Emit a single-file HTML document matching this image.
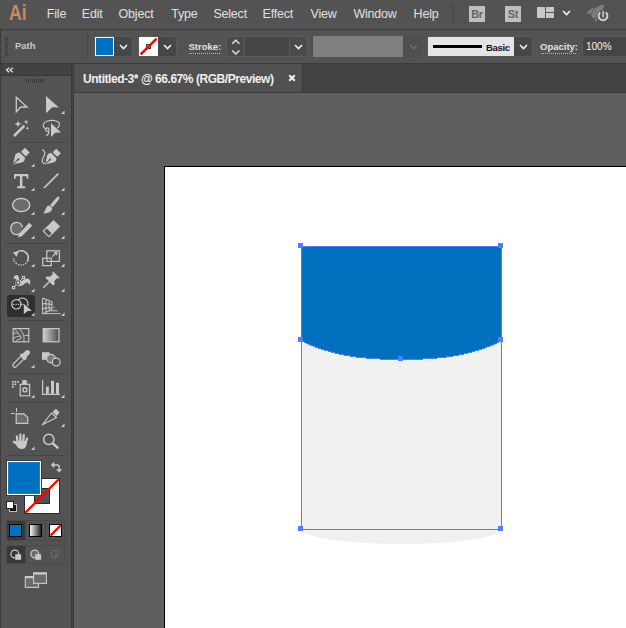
<!DOCTYPE html>
<html><head><meta charset="utf-8">
<style>
*{margin:0;padding:0;box-sizing:border-box}
html,body{width:626px;height:628px;overflow:hidden;background:#535353;font-family:"Liberation Sans",sans-serif}
.a{position:absolute}
#menu{left:0;top:0;width:626px;height:28px;background:#535353}
.mi{position:absolute;top:6.8px;font-size:12.5px;color:#e0e0e0;letter-spacing:-0.2px;line-height:15px}
#ctl{left:0;top:30px;width:626px;height:33px;background:#535353}
.lbl{position:absolute;font-size:10px;color:#d6d6d6;line-height:12px}
.dd{position:absolute;background:#474747;border-radius:3px}
#tabbar{left:74px;top:64px;width:552px;height:28px;background:#434343}
#tab{left:74px;top:64px;width:228px;height:28px;background:#505050;border-right:1px solid #3c3c3c;width:229px}
#canvas{left:74px;top:93px;width:552px;height:535px;background:#5f5f5f}
#panel{left:0;top:64px;width:71px;height:564px;background:#535353}
</style></head><body>
<!-- menu bar -->
<div id="menu" class="a">
  <div class="a" style="left:8.5px;top:1.6px;font-size:22px;font-weight:bold;color:#c88b60;letter-spacing:0px;line-height:22px;transform:scaleX(0.8);transform-origin:0 0">Ai</div>
  <div class="mi" style="left:46.8px">File</div>
  <div class="mi" style="left:81.8px">Edit</div>
  <div class="mi" style="left:118.6px">Object</div>
  <div class="mi" style="left:171.2px">Type</div>
  <div class="mi" style="left:213.4px">Select</div>
  <div class="mi" style="left:262.5px">Effect</div>
  <div class="mi" style="left:310.5px">View</div>
  <div class="mi" style="left:353.4px">Window</div>
  <div class="mi" style="left:413.6px">Help</div>
  <div class="a" style="left:452px;top:4px;width:2px;height:20px;background:#4a4a4a"></div>
  <div class="a" style="left:469px;top:6px;width:16px;height:16px;background:#bfbfbf;color:#666;font-size:11px;font-weight:bold;line-height:16px;text-align:center;letter-spacing:-0.3px">Br</div>
  <div class="a" style="left:505px;top:6px;width:16px;height:16px;background:#bfbfbf;color:#666;font-size:11px;font-weight:bold;line-height:16px;text-align:center;letter-spacing:-0.3px">St</div>
  <svg class="a" style="left:537px;top:7px" width="17" height="11"><g fill="#c8c8c8"><rect x="0" y="0" width="8" height="11"/><rect x="9" y="0" width="8" height="5"/><rect x="9" y="6" width="8" height="5"/></g></svg>
  <svg class="a" style="left:562px;top:10px" width="9" height="6"><path d="M1 1 L4.5 4.5 L8 1" fill="none" stroke="#f0f0f0" stroke-width="1.6"/></svg>
  <svg class="a" style="left:582px;top:0px" width="32" height="26">
  <path d="M9 15.5 C10 10.5 15 5.5 22.2 4.6 C21.8 11.5 17 16.8 11.8 18.4 Z" fill="#7e7e7e"/>
  <path d="M4.8 13.6 C6.2 10.2 9.2 8 12.8 8 C10.8 9.8 9.2 11.8 8.8 14 Z" fill="#7e7e7e"/>
  <path d="M12.8 22.2 C12.5 19.8 13.4 17.6 15.4 16.8 L16.4 19.2 Z" fill="#7e7e7e"/>
  <circle cx="21" cy="16.4" r="6.4" fill="#535353"/>
  <path d="M18.3 12.4 A4.4 4.4 0 1 0 23.7 12.4" fill="none" stroke="#d2d2d2" stroke-width="2"/>
  <rect x="20" y="10.8" width="2.1" height="7" fill="#d2d2d2" stroke="#535353" stroke-width="0.6"/>
</svg>
</div>
<div class="a" style="left:0;top:29px;width:626px;height:1px;background:#3c3c3c"></div>

<!-- control bar -->
<div id="ctl" class="a"></div>
<!-- grip -->
<svg class="a" style="left:5px;top:37px" width="4" height="19"><g fill="#3a3a3a"><rect x="0" y="0" width="3" height="1"/><rect x="0" y="2" width="3" height="1"/><rect x="0" y="4" width="3" height="1"/><rect x="0" y="6" width="3" height="1"/><rect x="0" y="8" width="3" height="1"/><rect x="0" y="10" width="3" height="1"/><rect x="0" y="12" width="3" height="1"/><rect x="0" y="14" width="3" height="1"/><rect x="0" y="16" width="3" height="1"/><rect x="0" y="18" width="3" height="1"/></g></svg>
<div class="lbl" style="left:15px;top:39.5px;font-size:9.5px;font-weight:bold;color:#c8c8c8">Path</div>
<div class="a" style="left:87px;top:34px;width:1px;height:25px;background:#474747"></div>
<div class="a" style="left:88px;top:34px;width:1px;height:25px;background:#4f4f4f"></div>
<!-- fill control -->
<div class="dd" style="left:94px;top:36px;width:39px;height:21px;border:1px solid #5a5a5a"></div>
<div class="a" style="left:95px;top:37px;width:19px;height:19px;background:#0070c0;border:1px solid #f4f4f4"></div>
<svg class="a" style="left:119px;top:44px" width="9" height="6"><path d="M1 1 L4.5 4.5 L8 1" fill="none" stroke="#f0f0f0" stroke-width="1.6"/></svg>
<!-- stroke control -->
<div class="dd" style="left:138px;top:36px;width:39px;height:21px;border:1px solid #5a5a5a"></div>
<svg class="a" style="left:139px;top:37px" width="19" height="19"><rect width="19" height="19" fill="#fff"/><rect x="7.6" y="7.6" width="3.8" height="3.8" fill="none" stroke="#16201f" stroke-width="1"/><line x1="1.6" y1="17.4" x2="17.6" y2="1.6" stroke="#ff0000" stroke-width="2.6"/></svg>
<svg class="a" style="left:163px;top:44px" width="9" height="6"><path d="M1 1 L4.5 4.5 L8 1" fill="none" stroke="#f0f0f0" stroke-width="1.6"/></svg>
<!-- stroke label -->
<div class="lbl" style="left:188.5px;top:41.2px;font-size:9.5px;font-weight:bold;color:#e2e2e2">Stroke:</div>
<div class="a" style="left:189px;top:53px;width:31px;height:1px;background:repeating-linear-gradient(90deg,#bdbdbd 0 1px,transparent 1px 2px)"></div>
<!-- spinner group -->
<div class="dd" style="left:226px;top:36px;width:82px;height:21px;background:#4b4b4b;border:1px solid #5c5c5c"></div>
<div class="a" style="left:245px;top:37px;width:44px;height:19px;background:#464646"></div>
<div class="a" style="left:244px;top:37px;width:1px;height:19px;background:#5a5a5a"></div>
<div class="a" style="left:289px;top:37px;width:1px;height:19px;background:#5a5a5a"></div>
<svg class="a" style="left:231px;top:38.6px" width="10" height="17"><path d="M1.2 4.8 L4.8 1.3 L8.4 4.8 M1.2 11.5 L4.8 15 L8.4 11.5" fill="none" stroke="#e6e6e6" stroke-width="1.4"/></svg>
<svg class="a" style="left:293.5px;top:44px" width="9" height="6"><path d="M1 1 L4.5 4.5 L8 1" fill="none" stroke="#f0f0f0" stroke-width="1.6"/></svg>
<!-- variable width (disabled) -->
<div class="a" style="left:311px;top:36px;width:111px;height:21px;background:#4f4f4f;border-radius:3px"></div>
<div class="a" style="left:313px;top:36px;width:90px;height:21px;background:#7f7f7f"></div>
<svg class="a" style="left:409px;top:44px" width="9" height="6"><path d="M1 1 L4.5 4.5 L8 1" fill="none" stroke="#6c6c6c" stroke-width="1.6"/></svg>
<!-- brush -->
<div class="dd" style="left:427px;top:36px;width:106px;height:21px;border:1px solid #5a5a5a"></div>
<div class="a" style="left:428px;top:37px;width:86px;height:19px;background:#e4e4e4"></div>
<div class="a" style="left:433px;top:45px;width:49px;height:3px;background:#000"></div>
<div class="lbl" style="left:486px;top:41.5px;font-size:9.5px;font-weight:bold;color:#10102a;letter-spacing:-0.3px">Basic</div>
<svg class="a" style="left:519px;top:44px" width="9" height="6"><path d="M1 1 L4.5 4.5 L8 1" fill="none" stroke="#f0f0f0" stroke-width="1.6"/></svg>
<!-- opacity -->
<div class="lbl" style="left:540px;top:41.2px;font-size:9.5px;font-weight:bold;color:#e2e2e2">Opacity:</div>
<div class="a" style="left:541px;top:53px;width:36px;height:1px;background:repeating-linear-gradient(90deg,#bdbdbd 0 1px,transparent 1px 2px)"></div>
<div class="dd" style="left:582px;top:36px;width:50px;height:21px;border:1px solid #5a5a5a;background:#454545"></div>
<div class="lbl" style="left:586px;top:40.5px;font-size:10px;color:#f4f4f4">100%</div>
<div class="a" style="left:0;top:63px;width:626px;height:1px;background:#3a3a3a"></div>
<!-- panel -->
<div id="panel" class="a"></div>
<div class="a" style="left:0;top:64px;width:71px;height:11px;background:#424242"></div>
<div class="a" style="left:0;top:75px;width:71px;height:1px;background:#3a3a3a"></div>
<div class="a" style="left:71px;top:64px;width:3px;height:564px;background:#393939"></div>
<div class="a" style="left:72px;top:64px;width:1px;height:564px;background:#444"></div>
<div class="a" style="left:0;top:29px;width:1px;height:599px;background:#3c3c3c"></div>
<svg class="a" style="left:0;top:0" width="74" height="628">
<defs>
<linearGradient id="gr1" x1="0" x2="1" y1="0" y2="0"><stop offset="0" stop-color="#d4d4d4"/><stop offset="1" stop-color="#4a4a4a"/></linearGradient>
<linearGradient id="gr2" x1="0" x2="1" y1="0" y2="0"><stop offset="0" stop-color="#ffffff"/><stop offset="1" stop-color="#1a1a1a"/></linearGradient>
</defs>
<!-- header chevrons -->
<path d="M9.2 67.8 L6.5 70 L9.2 72.2 M12.8 67.8 L10.1 70 L12.8 72.2" fill="none" stroke="#e0e0e0" stroke-width="1.3"/>
<!-- grip -->
<g fill="#3a3a3a"><rect x="26" y="79" width="1" height="4"/><rect x="28" y="79" width="1" height="4"/><rect x="30" y="79" width="1" height="4"/><rect x="32" y="79" width="1" height="4"/><rect x="34" y="79" width="1" height="4"/><rect x="36" y="79" width="1" height="4"/><rect x="38" y="79" width="1" height="4"/><rect x="40" y="79" width="1" height="4"/><rect x="42" y="79" width="1" height="4"/><rect x="44" y="79" width="1" height="4"/></g>
<!-- separators -->
<g fill="#464646"><rect x="6" y="142" width="60" height="1"/><rect x="6" y="243" width="60" height="1"/><rect x="6" y="320" width="60" height="1"/><rect x="6" y="373" width="60" height="1"/><rect x="6" y="402" width="60" height="1"/><rect x="6" y="455" width="60" height="1"/></g>
<!-- shape builder selected bg -->
<rect x="7" y="295" width="28" height="22" rx="3" fill="#2f2f2f"/>
<g fill="#c9c9c9" stroke="none">
<!-- corner triangles -->
<path d="M61 114 H64.5 V110.5Z"/>
<path d="M31 167 H34.5 V163.5Z"/>
<path d="M31 191 H34.5 V187.5Z"/><path d="M61 191 H64.5 V187.5Z"/>
<path d="M31 215 H34.5 V211.5Z"/><path d="M61 215 H64.5 V211.5Z"/>
<path d="M31 239 H34.5 V235.5Z"/><path d="M61 239 H64.5 V235.5Z"/>
<path d="M31 267 H34.5 V263.5Z"/><path d="M61 267 H64.5 V263.5Z"/>
<path d="M31 292 H34.5 V288.5Z"/><path d="M61 292 H64.5 V288.5Z"/>
<path d="M31 316 H34.5 V312.5Z"/><path d="M61 316 H64.5 V312.5Z"/>
<path d="M31 368 H34.5 V364.5Z"/>
<path d="M31 398 H34.5 V394.5Z"/><path d="M61 398 H64.5 V394.5Z"/>
<path d="M61 427 H64.5 V423.5Z"/>
<path d="M31 450 H34.5 V446.5Z"/>
<!-- direct selection -->
<path d="M46 96 L58.8 107.4 L52.3 107.2 L46 113.2Z"/>
</g>
<!-- selection -->
<path d="M16.3 97.2 L27 107 L20.8 107 L16.3 111.8Z" fill="none" stroke="#c9c9c9" stroke-width="1.3" stroke-linejoin="miter"/>
<!-- magic wand -->
<line x1="14" y1="136" x2="24.4" y2="125.6" stroke="#c9c9c9" stroke-width="2.5"/>
<g fill="#c9c9c9">
<path d="M18 120.5 L18.9 123.1 L21.5 124 L18.9 124.9 L18 127.5 L17.1 124.9 L14.5 124 L17.1 123.1Z"/>
<path d="M26.2 119.3 L26.9 121.2 L28.8 121.9 L26.9 122.6 L26.2 124.5 L25.5 122.6 L23.6 121.9 L25.5 121.2Z"/>
<path d="M27.4 126.3 L27.9 127.7 L29.3 128.2 L27.9 128.7 L27.4 130.1 L26.9 128.7 L25.5 128.2 L26.9 127.7Z"/>
</g>
<!-- lasso -->
<path d="M46.2 129.2 C43 127.8 42.2 124.6 44.6 122.4 C47.6 119.8 55 119.6 58.2 121.9 C60.2 123.4 59.8 126.4 57.2 128.2" fill="none" stroke="#c9c9c9" stroke-width="1.2"/>
<circle cx="47.4" cy="129.6" r="1.7" fill="none" stroke="#c9c9c9" stroke-width="1.2"/>
<path d="M48.6 130.8 C49.2 132.8 48.2 134.6 46.2 135.6" fill="none" stroke="#c9c9c9" stroke-width="1.2"/>
<path d="M51 123.2 L61 132.6 L55.2 132.8 L51 136.9Z" fill="#c9c9c9" stroke="#535353" stroke-width="0.8" paint-order="stroke"/>
<!-- pen -->
<g transform="translate(13,164.5) rotate(45)">
<path d="M0 0 L-5.2 -8.5 C-5.6 -10.5 -5 -12 -3.8 -13.2 L3.8 -13.2 C5 -12 5.6 -10.5 5.2 -8.5Z" fill="#c9c9c9"/>
<rect x="-3.4" y="-20.2" width="6.8" height="5.4" fill="#c9c9c9"/>
<line x1="0" y1="-0.5" x2="0" y2="-7" stroke="#535353" stroke-width="1"/>
<circle cx="0" cy="-7.5" r="1.1" fill="#535353"/>
</g>
<!-- curvature pen -->
<g transform="translate(45,164.5) rotate(45) scale(0.95)">
<path d="M0 0 L-5.2 -8.5 C-5.6 -10.5 -5 -12 -3.8 -13.2 L3.8 -13.2 C5 -12 5.6 -10.5 5.2 -8.5Z" fill="#c9c9c9"/>
<rect x="-3.4" y="-20.2" width="6.8" height="5.4" fill="#c9c9c9"/>
<line x1="0" y1="-0.5" x2="0" y2="-7" stroke="#535353" stroke-width="1"/>
<circle cx="0" cy="-7.5" r="1.1" fill="#535353"/>
</g>
<path d="M42 149.5 C45.5 150.5 45.5 154 43.5 157 C41.5 160 41.5 164 45.5 163.5" fill="none" stroke="#c9c9c9" stroke-width="1.2"/>
<!-- type -->
<path d="M14 174 H28.3 V178.8 H26.6 V176.3 H22.4 V186.2 H25.2 V188.2 H17.2 V186.2 H19.9 V176.3 H15.7 V178.8 H14Z" fill="#c9c9c9"/>
<!-- line -->
<line x1="44" y1="188" x2="58.3" y2="173.6" stroke="#c9c9c9" stroke-width="1.7"/>
<!-- ellipse -->
<ellipse cx="21.2" cy="205" rx="8.6" ry="6.6" fill="#6c6c6c" stroke="#d0d0d0" stroke-width="1.3"/>
<!-- paintbrush -->
<path d="M58.6 196.5 C59.8 196.8 59.6 198.5 58 200.5 L52.6 207.2 L50.2 205 L56 198.3 C57.2 197 58 196.4 58.6 196.5Z" fill="#c9c9c9"/>
<path d="M49.6 205.5 L52.2 207.9 C52 211.5 48.5 213.6 43 213.2 C44.8 211.8 45.3 209.6 46.2 207.8 C47 206.2 48.3 205.4 49.6 205.5Z" fill="#c9c9c9"/>
<!-- shaper -->
<path d="M20.6 233.2 C19.5 234.2 18 234.7 16.6 234.7 C13 234.7 10.8 231.9 10.8 228.4 C10.8 224.9 13.3 222.3 16.6 222.3 C19.6 222.3 22 224.5 22.4 227.2" fill="#6c6c6c" stroke="#cfcfcf" stroke-width="1.3"/>
<path d="M29.2 222.8 L32.2 225.8 L21.8 236.2 L18.2 237.4 L19 233.8Z" fill="#c9c9c9"/>
<!-- eraser -->
<g transform="translate(51.3,228.7) rotate(45)">
<rect x="-4.6" y="-7.8" width="9.2" height="10.2" fill="#c9c9c9"/>
<rect x="-4" y="2.4" width="8" height="5" fill="none" stroke="#c9c9c9" stroke-width="1.2"/>
</g>
<!-- rotate -->
<path d="M16.5 252.3 C18 251.2 19.6 250.7 21.2 250.7 C25.3 250.7 28.3 254 28.3 257.8 C28.3 259.3 27.9 260.6 27.2 261.7" fill="none" stroke="#c9c9c9" stroke-width="1.6"/>
<path d="M12.8 252.3 L18.6 251.6 L16.6 256.8Z" fill="#c9c9c9"/>
<g fill="#c9c9c9"><circle cx="25.8" cy="263.4" r="0.8"/><circle cx="23.5" cy="264.7" r="0.8"/><circle cx="21" cy="265.1" r="0.8"/><circle cx="18.5" cy="264.7" r="0.8"/><circle cx="16.2" cy="263.4" r="0.8"/><circle cx="14.4" cy="261.4" r="0.8"/><circle cx="13.6" cy="259" r="0.8"/></g>
<!-- scale -->
<rect x="42.7" y="258.2" width="8.6" height="7.4" fill="none" stroke="#c9c9c9" stroke-width="1.2"/>
<rect x="46.8" y="250.8" width="12.6" height="10.6" fill="none" stroke="#c9c9c9" stroke-width="1.2"/>
<line x1="52.3" y1="256.6" x2="56.5" y2="252.6" stroke="#c9c9c9" stroke-width="1.2"/>
<path d="M57.5 251.5 L57.2 255.8 L53.4 252Z" fill="#c9c9c9"/>
<!-- puppet warp -->
<path d="M14 279.2 C13.3 277.3 14.3 275.2 16.2 275.1 C17.8 275.1 18.9 276.6 19 278.6 C19.1 280.3 19.8 281.3 21.3 280.9 C23.2 280.3 24.6 278.6 26.6 278.4 C28.7 278.3 30.4 279.8 30.3 282 C30.3 283.2 29.9 284.4 29.3 285.2 C29 283.8 28.5 282.3 27.2 282.4 C25.3 282.6 23.6 285.1 20.6 285.9 C17.8 286.6 15.3 285.3 15.3 283 C15.3 281.6 16.4 280.7 16.3 279.6 C16.2 278.6 15.1 278.4 14 279.2Z" fill="#c9c9c9"/>
<line x1="13.5" y1="287.5" x2="23.5" y2="277.5" stroke="#c9c9c9" stroke-width="1"/>
<rect x="12.5" y="286.5" width="2.2" height="2.2" fill="#535353" stroke="#d0d0d0" stroke-width="1"/>
<circle cx="18.1" cy="282.7" r="1.9" fill="#c9c9c9" stroke="#535353" stroke-width="1.1"/>
<rect x="22.4" y="276.4" width="2.2" height="2.2" fill="#535353" stroke="#d0d0d0" stroke-width="1"/>
<!-- pin -->
<g transform="translate(50,281) rotate(45)">
<path d="M-4.5 -9 H4.5 V-7.5 H3 V-3 L5.5 -1 V1 H-5.5 V-1 L-3 -3 V-7.5 H-4.5Z" fill="#c9c9c9"/>
<line x1="0" y1="1" x2="0" y2="9.5" stroke="#c9c9c9" stroke-width="1.5"/>
</g>
<!-- shape builder -->
<path d="M18.2 299.9 C19.2 298.7 20.6 298 22.2 298 C25.4 298 28 300.6 28 303.8 C28 304.6 27.8 305.3 27.6 306" fill="none" stroke="#cfcfcf" stroke-width="1.2"/>
<circle cx="16.4" cy="304.3" r="4.7" fill="none" stroke="#cfcfcf" stroke-width="1.2"/>
<g fill="#ececec"><circle cx="13.8" cy="304.3" r="0.65"/><circle cx="16.1" cy="304.3" r="0.65"/><circle cx="18.4" cy="304.3" r="0.65"/><circle cx="20.7" cy="304.3" r="0.65"/><circle cx="23" cy="304.3" r="0.65"/></g>
<path d="M23.8 303.8 L32 311 L27.6 311 L23.8 314.2Z" fill="#c9c9c9"/>
<!-- perspective grid -->
<path d="M42.6 298 V314 M42.6 298 L52 301.8 V309.6 M46 299.4 V312.5 M49.2 300.7 V311.1 M42.6 303.4 L52 304.6 M42.6 308.8 L52 307.4 M42.6 314 L52 309.6" fill="none" stroke="#c9c9c9" stroke-width="1.05"/>
<path d="M52 305.5 L55.5 308.2 H52Z" fill="#8c8c8c"/>
<path d="M50 310.8 H57.8 M44 313.6 H60.8" fill="none" stroke="#bdbdbd" stroke-width="1"/>
<!-- mesh -->
<rect x="13.2" y="328.6" width="15.6" height="13.2" fill="none" stroke="#c9c9c9" stroke-width="1.2"/>
<path d="M18.8 328.6 C22.8 331.5 24.8 336 23.8 341.8 M13.2 333.6 C15.5 332.4 17.8 332.8 19.6 334.6 C20.8 335.8 21.2 337.5 21 338.8 M13.2 339 C15 337 17.5 336 20.5 336.2 M24.5 335.4 H28.8 M15.5 341.8 C16.5 340 18.5 338.8 21.2 338.9 M14.5 329.4 C16.3 330.6 17.6 331.8 18.4 333.3" fill="none" stroke="#c9c9c9" stroke-width="1"/>
<!-- gradient -->
<rect x="43.2" y="328.6" width="15.8" height="13.2" fill="url(#gr1)" stroke="#c9c9c9" stroke-width="1.2"/>
<!-- eyedropper -->
<g transform="translate(20.5,359.5) rotate(45)">
<rect x="-2" y="-3" width="4" height="13" rx="2" fill="none" stroke="#c9c9c9" stroke-width="1.2"/>
<rect x="-3.8" y="-5.5" width="7.6" height="3.2" rx="1" fill="#c9c9c9"/>
<path d="M-2.6 -5 V-9.5 C-2.6 -11.3 -1.4 -12.4 0 -12.4 C1.4 -12.4 2.6 -11.3 2.6 -9.5 V-5Z" fill="#c9c9c9"/>
</g>
<!-- blend -->
<rect x="42" y="352.2" width="7.6" height="7.6" fill="#c9c9c9"/>
<circle cx="51" cy="358.6" r="4.3" fill="#7c7c7c" stroke="#c9c9c9" stroke-width="1.2"/>
<circle cx="56.2" cy="362" r="3.9" fill="#535353" stroke="#c9c9c9" stroke-width="1.2"/>
<!-- symbol sprayer -->
<g fill="#c9c9c9"><rect x="12" y="381" width="1.7" height="1.7"/><rect x="14.5" y="381" width="1.7" height="1.7"/><rect x="17" y="381" width="1.7" height="1.7"/><rect x="12" y="383.5" width="1.7" height="1.7"/><rect x="14.5" y="383.5" width="1.7" height="1.7"/><rect x="12" y="386" width="1.7" height="1.7"/><rect x="22.3" y="380.2" width="4.5" height="4"/></g>
<rect x="20.2" y="384.3" width="9.4" height="11.5" fill="none" stroke="#c9c9c9" stroke-width="1.2"/>
<circle cx="24.9" cy="389.8" r="2.1" fill="none" stroke="#c9c9c9" stroke-width="1.4"/>
<!-- graph -->
<path d="M42.6 380.2 V394.3 H60" fill="none" stroke="#c9c9c9" stroke-width="1.2"/>
<g fill="#c9c9c9"><rect x="45.9" y="386.6" width="3" height="7.2"/><rect x="51" y="380.8" width="3" height="13"/><rect x="56" y="382.7" width="3" height="11.1"/></g>
<!-- artboard -->
<path d="M10.8 413.5 H14.8 M16.5 408 V412" stroke="#c9c9c9" stroke-width="1" fill="none"/>
<path d="M16.2 413.8 H24 L27.8 417.6 V423.4 H16.2Z" fill="#6c6c6c" stroke="#c9c9c9" stroke-width="1.2"/>
<!-- slice / knife -->
<path d="M42.3 424.8 L51.5 413 L56.5 417.5Z" fill="none" stroke="#c9c9c9" stroke-width="1.2" stroke-linejoin="round"/>
<path d="M52.5 412 L56 408.8 L59.5 412.5 L56.8 416Z" fill="#c9c9c9"/>
<!-- hand -->
<g stroke="#c9c9c9" stroke-linecap="round" fill="none" stroke-width="2.3">
<line x1="17.6" y1="442" x2="16.8" y2="436.3"/>
<line x1="20.4" y1="442" x2="20.3" y2="434.6"/>
<line x1="23.2" y1="442" x2="23.8" y2="435.2"/>
<line x1="25.6" y1="443" x2="27.1" y2="438.6"/>
<line x1="20" y1="446" x2="14" y2="441.8" stroke-width="2.5"/>
</g>
<path d="M16.5 441 H27 C27 445.5 25.5 449 21.8 449 C19 449 17.6 447.5 16.5 445.8Z" fill="#c9c9c9"/>
<!-- zoom -->
<circle cx="48.8" cy="439.4" r="5.2" fill="none" stroke="#c9c9c9" stroke-width="1.5"/>
<line x1="52.8" y1="443.4" x2="58.4" y2="448.4" stroke="#c9c9c9" stroke-width="2.4"/>
<!-- fill/stroke swatches -->
<rect x="24.5" y="478.5" width="35" height="35" fill="#fff" stroke="#2b2b2b" stroke-width="1"/>
<rect x="34.5" y="488.5" width="15" height="15" fill="#535353" stroke="#2b2b2b" stroke-width="1"/>
<line x1="25.3" y1="512.7" x2="58.7" y2="479.3" stroke="#ff0000" stroke-width="2.3"/>
<rect x="6.5" y="460.5" width="35" height="35" fill="#0070c0" stroke="#2b2b2b" stroke-width="1"/>
<rect x="7.5" y="461.5" width="33" height="33" fill="none" stroke="#ffffff" stroke-width="1.2"/>
<!-- swap -->
<path d="M52 465 H57.2 C58.4 465 59.2 465.8 59.2 467 V470.5" fill="none" stroke="#c9c9c9" stroke-width="1.4"/>
<path d="M50.8 465 L54.2 461.8 V468.2Z M59.2 472.6 L56 469.2 H62.4Z" fill="#c9c9c9"/>
<!-- default colors -->
<rect x="9.5" y="504.5" width="7" height="7" fill="#111" stroke="#bdbdbd" stroke-width="1"/>
<rect x="6.5" y="501.5" width="7" height="7" fill="#fff" stroke="#222" stroke-width="1"/>
<!-- mode buttons -->
<rect x="6.5" y="520.5" width="58" height="20" rx="2.5" fill="#535353" stroke="#4a4a4a" stroke-width="1"/>
<rect x="7" y="521" width="18" height="19" fill="#393939"/>
<line x1="25.5" y1="521" x2="25.5" y2="540" stroke="#4a4a4a"/>
<line x1="45.5" y1="521" x2="45.5" y2="540" stroke="#4a4a4a"/>
<rect x="9.5" y="524.5" width="12" height="12" fill="#0070c0" stroke="#000" stroke-width="1"/>
<rect x="29.5" y="524.5" width="12" height="12" fill="url(#gr2)" stroke="#000" stroke-width="1"/>
<rect x="49.5" y="524.5" width="12" height="12" fill="#fff" stroke="#000" stroke-width="1"/>
<line x1="50.5" y1="535.5" x2="60.5" y2="525.5" stroke="#ff0000" stroke-width="2.4"/>
<!-- draw modes -->
<rect x="6.5" y="545.5" width="58" height="18" rx="2.5" fill="#535353" stroke="#4a4a4a" stroke-width="1"/>
<rect x="7" y="546" width="18" height="17" fill="#393939"/>
<line x1="25.5" y1="546" x2="25.5" y2="563" stroke="#4a4a4a"/>
<line x1="45.5" y1="546" x2="45.5" y2="563" stroke="#4a4a4a"/>
<circle cx="14.8" cy="554" r="3.9" fill="none" stroke="#c9c9c9" stroke-width="1.2"/>
<rect x="15.3" y="554.2" width="5.8" height="5.6" fill="#c9c9c9"/>
<circle cx="34.8" cy="554" r="3.9" fill="#6c6c6c" stroke="#c9c9c9" stroke-width="1.2"/>
<rect x="35.3" y="554.2" width="5.8" height="5.6" fill="#c9c9c9"/>
<circle cx="54.8" cy="554.2" r="3.6" fill="none" stroke="#6a6a6a" stroke-width="1.1"/>
<path d="M54.8 554.2 H57.6 A2.8 2.8 0 0 1 54.8 557Z" fill="#6a6a6a"/>
<!-- screen mode -->
<rect x="25.3" y="576.6" width="13.2" height="10.8" fill="#6c6c6c" stroke="#c9c9c9" stroke-width="1.1"/>
<rect x="25.3" y="576.6" width="13.2" height="1.6" fill="#c9c9c9"/>
<rect x="33.6" y="572.8" width="12.8" height="10.6" fill="#6c6c6c" stroke="#c9c9c9" stroke-width="1.1"/>
<rect x="33.6" y="572.8" width="12.8" height="1.8" fill="#c9c9c9"/>
</svg>

<!-- tabs -->
<div id="tabbar" class="a"></div>
<div id="tab" class="a"></div>
<div class="a" style="left:74px;top:92px;width:552px;height:1px;background:#3a3a3a"></div>
<svg class="a" style="left:288px;top:74px" width="8" height="8"><path d="M1.2 1.2 L6.8 6.8 M6.8 1.2 L1.2 6.8" stroke="#f2f2f2" stroke-width="2"/></svg>
<div class="a" style="left:83px;top:72.5px;font-size:12px;font-weight:bold;color:#f0f0f0;line-height:13px;letter-spacing:-0.45px">Untitled-3* @ 66.67% (RGB/Preview)</div>
<!-- canvas -->
<div id="canvas" class="a"></div>
<div class="a" style="left:164px;top:166px;width:462px;height:462px;background:#fff;border-left:1px solid #000;border-top:1px solid #000"></div>
<svg class="a" style="left:0;top:0" width="626" height="628">
  <ellipse cx="401.5" cy="529" rx="100" ry="15" fill="#f0f0f0"/>
  <rect x="301" y="246" width="201" height="284" fill="#f1f1f2" shape-rendering="crispEdges"/>
  <path d="M301 246 H502 V341 C472.1 355.5 441.2 359.6 401.5 359.6 C361.8 359.6 330.9 355.5 301 341 Z" fill="#0070bf" shape-rendering="crispEdges"/>
  <rect x="301.5" y="246.5" width="200" height="283" fill="none" stroke="#4f7dff" stroke-width="1" shape-rendering="crispEdges"/>
  <path d="M501.5 341 C472.1 355.5 441.2 359.6 401.5 359.6 C361.8 359.6 330.9 355.5 301.5 341" fill="none" stroke="#4f7dff" stroke-width="1" shape-rendering="crispEdges"/>
  <g fill="#4f7dff">
    <rect x="298" y="243" width="5" height="5"/><rect x="498" y="243" width="5" height="5"/>
    <rect x="298" y="337" width="5" height="5"/><rect x="498" y="337" width="5" height="5"/>
    <rect x="398" y="356" width="5" height="5"/>
    <rect x="298" y="526" width="5" height="5"/><rect x="498" y="526" width="5" height="5"/>
  </g>
</svg>
</body></html>
